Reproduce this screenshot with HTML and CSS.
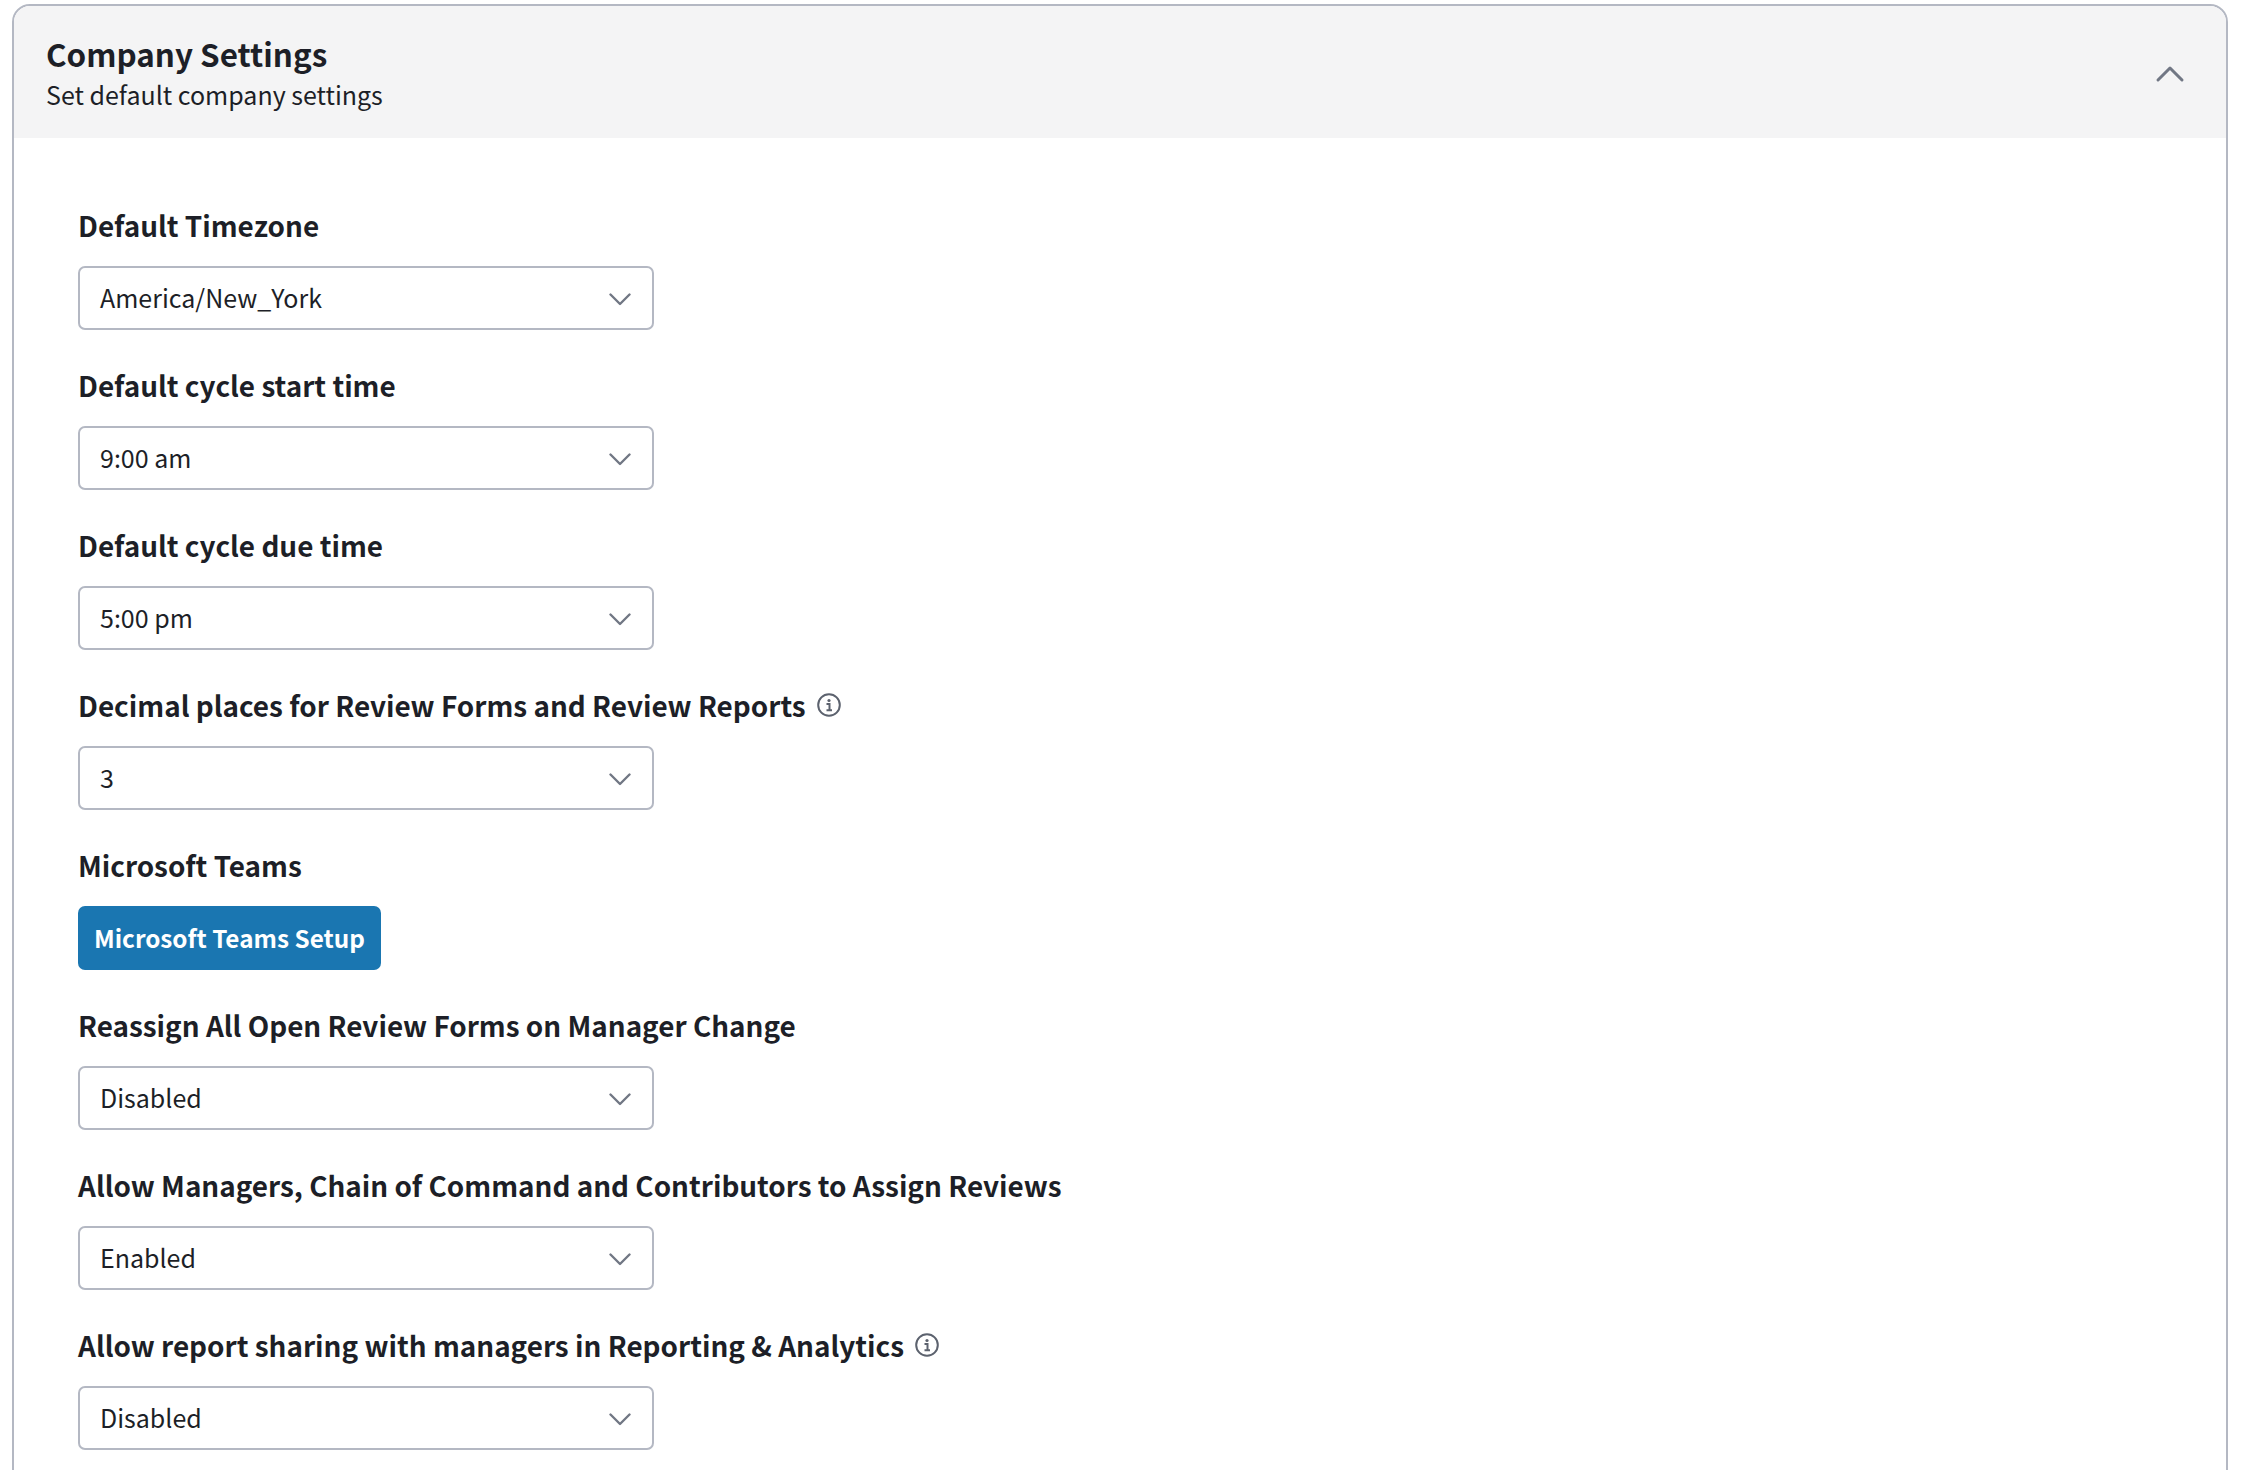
FILE: index.html
```html
<!DOCTYPE html>
<html lang="en">
<head>
  <meta charset="UTF-8">
  <title>Company Settings</title>
  <link rel="stylesheet" href="styles.css">
</head>
<body>
  <div class="card">
    <div class="card-header">
      <div>
        <h1 class="card-title">Company Settings</h1>
        <p class="card-subtitle">Set default company settings</p>
      </div>
      <svg class="collapse-icon" width="30" height="18" viewBox="0 0 30 18"><path d="M3 15 L15 3 L27 15" /></svg>
    </div>
    <div class="card-body">
      <div class="field">
        <label class="field-label">Default Timezone</label>
        <div class="select"><span>America/New_York</span><svg class="select-icon" viewBox="0 0 22 13"><path d="M1.5 1.5 L11 11 L20.5 1.5" /></svg></div>
      </div>
      <div class="field">
        <label class="field-label">Default cycle start time</label>
        <div class="select"><span>9:00 am</span><svg class="select-icon" viewBox="0 0 22 13"><path d="M1.5 1.5 L11 11 L20.5 1.5" /></svg></div>
      </div>
      <div class="field">
        <label class="field-label">Default cycle due time</label>
        <div class="select"><span>5:00 pm</span><svg class="select-icon" viewBox="0 0 22 13"><path d="M1.5 1.5 L11 11 L20.5 1.5" /></svg></div>
      </div>
      <div class="field">
        <label class="field-label">Decimal places for Review Forms and Review Reports
          <svg class="info-icon" viewBox="0 0 24 24"><circle cx="12" cy="12" r="10.8" /><circle class="info-dot" cx="12" cy="7.5" r="1.6" /><path d="M9.5 11 H12.5 V17 M9.5 17.2 H15" /></svg>
        </label>
        <div class="select"><span>3</span><svg class="select-icon" viewBox="0 0 22 13"><path d="M1.5 1.5 L11 11 L20.5 1.5" /></svg></div>
      </div>
      <div class="field">
        <label class="field-label">Microsoft Teams</label>
        <button class="btn-primary">Microsoft Teams Setup</button>
      </div>
      <div class="field">
        <label class="field-label">Reassign All Open Review Forms on Manager Change</label>
        <div class="select"><span>Disabled</span><svg class="select-icon" viewBox="0 0 22 13"><path d="M1.5 1.5 L11 11 L20.5 1.5" /></svg></div>
      </div>
      <div class="field">
        <label class="field-label">Allow Managers, Chain of Command and Contributors to Assign Reviews</label>
        <div class="select"><span>Enabled</span><svg class="select-icon" viewBox="0 0 22 13"><path d="M1.5 1.5 L11 11 L20.5 1.5" /></svg></div>
      </div>
      <div class="field">
        <label class="field-label">Allow report sharing with managers in Reporting &amp; Analytics
          <svg class="info-icon" viewBox="0 0 24 24"><circle cx="12" cy="12" r="10.8" /><circle class="info-dot" cx="12" cy="7.5" r="1.6" /><path d="M9.5 11 H12.5 V17 M9.5 17.2 H15" /></svg>
        </label>
        <div class="select"><span>Disabled</span><svg class="select-icon" viewBox="0 0 22 13"><path d="M1.5 1.5 L11 11 L20.5 1.5" /></svg></div>
      </div>
    </div>
  </div>
</body>
</html>
```

FILE: styles.css
```css
html, body {
  height: 1470px;
  overflow: hidden;
}

body {
  margin: 0;
  padding: 4px 14px 0 12px;
  background-color: white;
  font-family: "Noto Sans CJK JP", "Noto Sans", sans-serif;
  color: #1d1f27;
}

.card {
  border: 2px solid #b4b8c3;
  border-radius: 18px;
  height: 1600px;
  overflow: hidden;
}

.card-header {
  display: flex;
  justify-content: space-between;
  align-items: center;
  height: 132px;
  padding: 0 41px 0 32px;
  background-color: #f4f4f5;
}

.card-title {
  margin: 0;
  font-size: 31.4px;
  line-height: 44px;
  font-weight: 600;
}

.card-subtitle {
  margin: 0;
  font-size: 25px;
  line-height: 36px;
  font-weight: 400;
}

.collapse-icon {
  margin-top: 3px;
}

.collapse-icon path {
  fill: none;
  stroke: #717784;
  stroke-width: 3;
  stroke-linecap: round;
  stroke-linejoin: round;
}

.card-body {
  padding: 64px 64px 0;
}

.field {
  height: 160px;
}

.field-label {
  display: flex;
  align-items: center;
  gap: 11px;
  height: 46px;
  margin-bottom: 18px;
  font-size: 27.9px;
  font-weight: 600;
}

.select {
  display: flex;
  justify-content: space-between;
  align-items: center;
  box-sizing: border-box;
  width: 576px;
  height: 64px;
  padding: 0 21px 0 20px;
  border: 2px solid #b4b8c3;
  border-radius: 7px;
  font-size: 25px;
}

.select span {
  margin-top: -2px;
}

.select-icon {
  width: 22px;
  height: 13px;
  margin-top: 2px;
}

.select-icon path {
  fill: none;
  stroke: #717784;
  stroke-width: 2.4;
  stroke-linecap: round;
  stroke-linejoin: round;
}

.info-icon {
  width: 24px;
  height: 24px;
}

.info-icon circle, .info-icon path {
  fill: none;
  stroke: #5c626e;
  stroke-width: 2;
}

.info-icon .info-dot {
  fill: #5c626e;
  stroke: none;
}

.btn-primary {
  display: block;
  height: 64px;
  padding: 0 16px 2px;
  background-color: #1a76b1;
  color: white;
  border: none;
  border-radius: 7px;
  font-family: inherit;
  font-size: 24.3px;
  font-weight: 600;
}
```
